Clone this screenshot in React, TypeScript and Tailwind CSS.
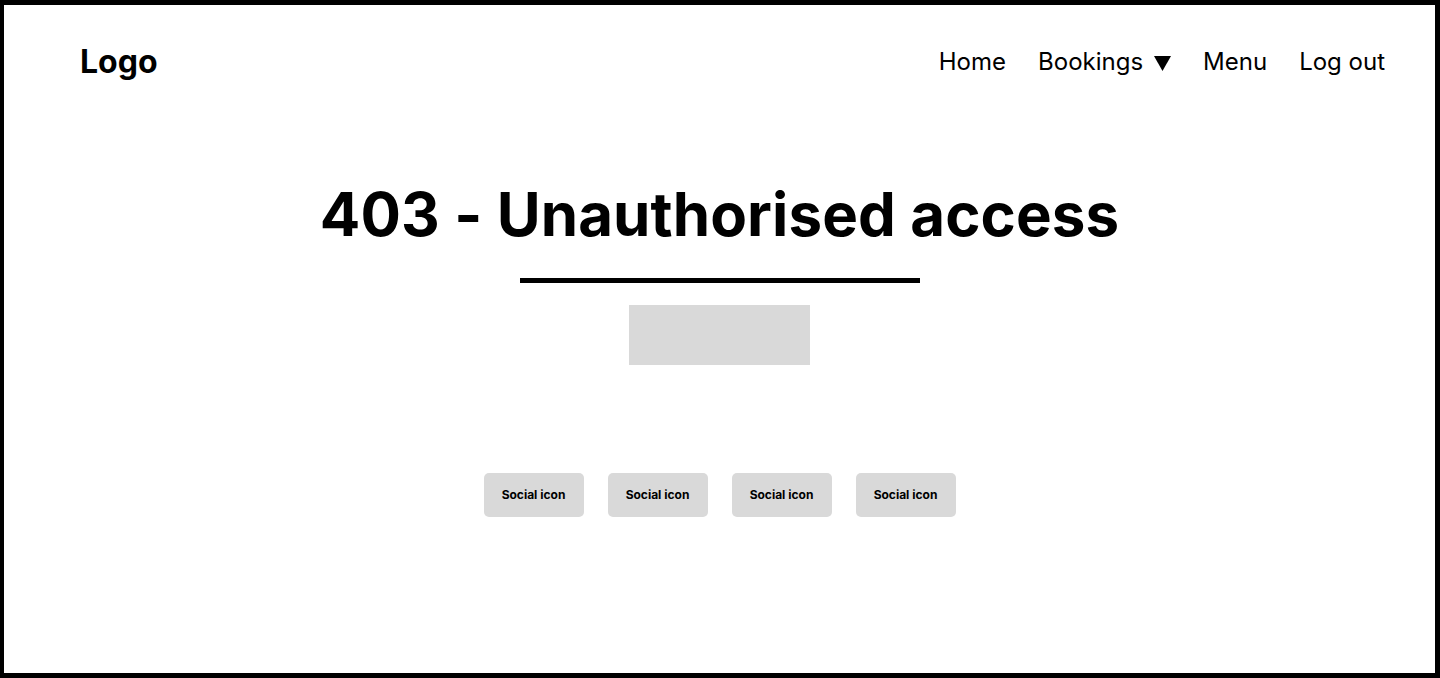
const navLinks = ["Home", "Bookings", "Menu", "Log out"];

const App = () => {
  return (
    <div
      className="h-[678px] w-full bg-white border-t-[5px] border-r-[5px] border-b-[5px] border-l-4 border-black flex flex-col text-black"
      style={{ fontFamily: "Inter, 'Noto Sans', sans-serif" }}
    >
      <header className="h-[114px] flex items-center justify-between pl-[76px] pr-[50px]">
        <div className="text-[32px] font-bold leading-none">Logo</div>
        <nav className="flex items-center gap-8 text-[24px] leading-none">
          {navLinks.map((link) =>
            link === "Bookings" ? (
              <div key={link} className="flex items-center gap-[11px]">
                <span>{link}</span>
                <svg width="17" height="15" viewBox="0 0 17 15" className="mt-[2px]">
                  <polygon points="0,0 17,0 8.5,15" fill="black" />
                </svg>
              </div>
            ) : (
              <span key={link}>{link}</span>
            )
          )}
        </nav>
      </header>

      <main className="flex flex-col items-center">
        <h1 className="mt-[59px] text-[60px] font-bold leading-[72px] tracking-[0.1px]">
          403 - Unauthorised access
        </h1>
        <div className="mt-[28px] h-[5px] w-[400px] bg-black" />
        <div className="mt-[22px] h-[60px] w-[181px] bg-[#d9d9d9]" />

        <div className="mt-[108px] flex gap-6">
          {[1, 2, 3, 4].map((i) => (
            <div
              key={i}
              className="h-[44px] w-[100px] rounded-[5px] bg-[#d9d9d9] flex items-center justify-center text-[12px] font-bold"
            >
              Social icon
            </div>
          ))}
        </div>
      </main>
    </div>
  );
};

export default App;
